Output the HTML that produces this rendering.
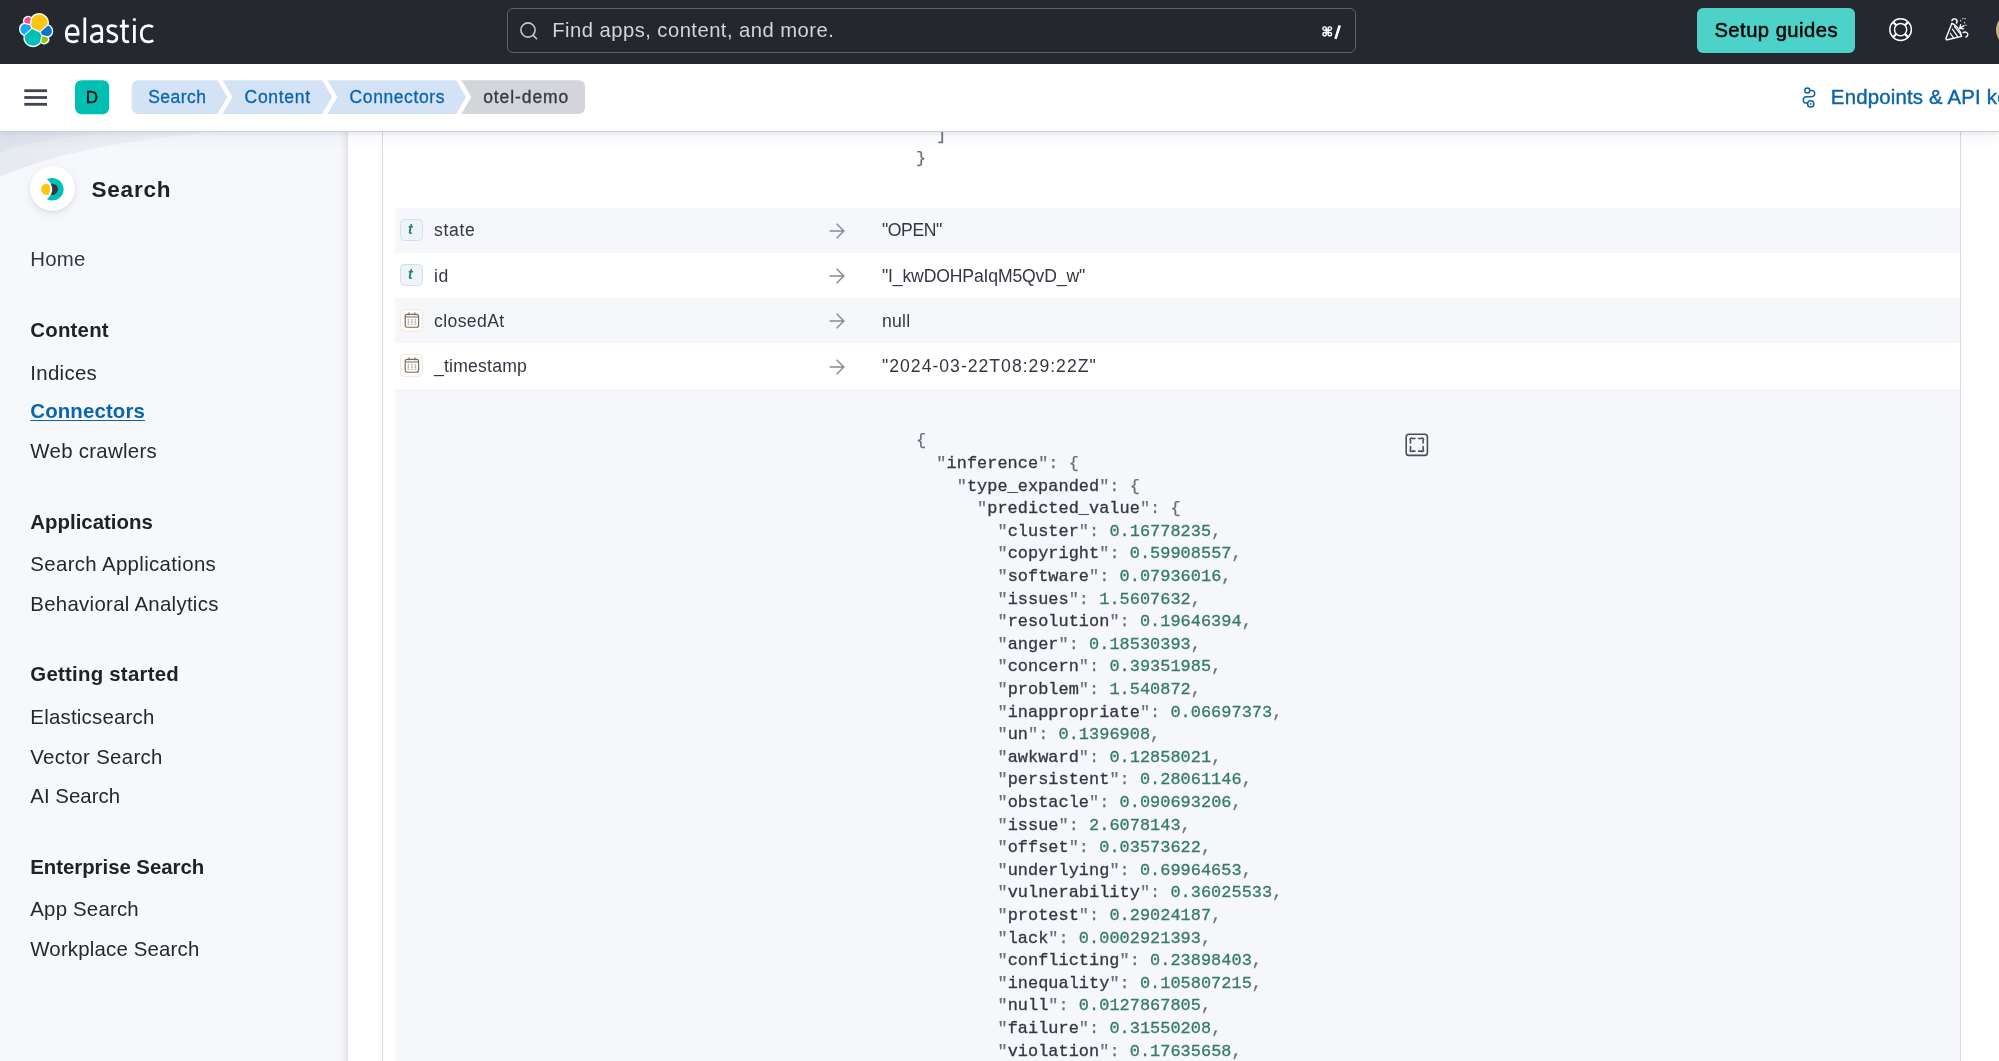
<!DOCTYPE html>
<html lang="en">
<head>
<meta charset="utf-8">
<title>otel-demo - Connectors - Search - Elastic</title>
<style>
*{box-sizing:border-box;margin:0;padding:0}
html,body{width:1999px;height:1061px;overflow:hidden;background:#fff}
body{position:relative;font-family:"Liberation Sans",sans-serif;color:#343741}
.abs{position:absolute}
.t,.tl{position:absolute;white-space:nowrap}
.c{position:absolute;white-space:pre;font:400 16.9px/22.6px "Liberation Mono",monospace;color:#343741}
.c .p{color:#69707d;-webkit-text-stroke:.25px #69707d}.c .k{color:#343741;-webkit-text-stroke:.3px #343741}.c .n{color:#357a66;-webkit-text-stroke:.3px #357a66}
#hdr1{left:0;top:0;width:1999px;height:64px;background:#25282f;z-index:20}
#hdr2{left:0;top:64px;width:1999px;height:67.6px;background:#fff;z-index:19;border-bottom:1px solid #ccd3de;box-shadow:0 2px 3px rgba(70,85,110,.06),0 6px 12px rgba(70,85,110,.07)}
#side{left:0;top:131px;width:348px;height:930px;background:linear-gradient(to right,rgba(30,32,40,0) 339px,rgba(30,32,40,.035) 344px,rgba(30,32,40,.10) 348px),#f7f8fc;z-index:5;overflow:hidden}
#panel{left:382px;top:100px;width:1579px;height:1000px;border-left:1px solid #d8dbe6;border-right:1px solid #d8dbe6;background:#fff;z-index:1}
.stripe{position:absolute;left:395px;width:1565px;background:#f5f7fa;z-index:2}
#txt{position:absolute;left:0;top:0;z-index:30;will-change:transform}
#code{position:absolute;left:0;top:0;z-index:3;will-change:transform}
.tok{position:absolute;width:22.6px;height:22.6px;border-radius:4.5px;z-index:4}
.tok.s{background:#eef3f8;border:1px solid #cfe0f2}
.tok.d{background:#fcfbf8;border:1px solid #f0e9dc}
svg{position:absolute;overflow:visible}
</style>
</head>
<body>
<!-- ===== dark top header ===== -->
<div id="hdr1" class="abs">
  <svg style="left:18.6px;top:12.6px" width="34.2" height="34.2" viewBox="0 0 32 32">
    <path fill="#FFF" d="M32 16.77a6.334 6.334 0 00-1.14-3.63 6.27 6.27 0 00-3.02-2.3 9.04 9.04 0 00.16-1.7 9.06 9.06 0 00-1.74-5.37A9.1 9.1 0 0021.7.44a9.16 9.16 0 00-5.66.02 9.1 9.1 0 00-4.56 3.3 4.78 4.78 0 00-5.23-.55 4.86 4.86 0 00-1.8 1.51 4.82 4.82 0 00-.62 4.47 6.37 6.37 0 00-3.02 2.31A6.37 6.37 0 000 15.24c0 1.3.4 2.58 1.15 3.65a6.3 6.3 0 003.03 2.3 9.02 9.02 0 001.55 7.05 9.07 9.07 0 004.55 3.31 9.13 9.13 0 005.64.01 9.07 9.07 0 004.56-3.29 4.79 4.79 0 005.22.53 4.83 4.83 0 002.43-5.97 6.37 6.37 0 003.01-2.31A6.33 6.33 0 0032 16.77"/>
    <path fill="#FEC514" d="M12.58 13.79l7 3.18 7.07-6.16a7.8 7.8 0 00.15-1.55c0-1.67-.54-3.3-1.53-4.64a7.9 7.9 0 00-4.02-2.83 7.94 7.94 0 00-4.93.08 7.89 7.89 0 00-3.93 2.95l-1.18 6.06 1.37 2.91z"/>
    <path fill="#00BFB3" d="M5.33 21.2a7.9 7.9 0 001.39 6.2 7.95 7.95 0 004.04 2.85c1.62.5 3.36.47 4.96-.08a7.92 7.92 0 003.94-2.98l1.16-6.04-1.55-2.96-7.03-3.19-6.91 6.2z"/>
    <path fill="#F04E98" d="M5.29 9.14l4.8 1.13 1.05-5.42a3.8 3.8 0 00-4.25-.52 3.78 3.78 0 00-1.6 4.81"/>
    <path fill="#1BA9F5" d="M4.87 10.28a5.35 5.35 0 00-2.57 1.9 5.27 5.27 0 00-.98 3.04c0 1.1.34 2.17.96 3.07a5.32 5.32 0 002.57 1.96l6.73-6.05-1.24-2.63-5.47-1.29z"/>
    <path fill="#93C90E" d="M20.87 27.15a3.78 3.78 0 004.22.5 3.76 3.76 0 001.63-4.77l-4.8-1.12-1.05 5.39z"/>
    <path fill="#07C" d="M21.85 20.5l5.28 1.23a5.37 5.37 0 002.57-1.9 5.28 5.28 0 00.03-6.12 5.32 5.32 0 00-2.58-1.95l-6.9 6.02 1.6 2.72z"/>
  </svg>
  <svg style="left:0;top:0" width="200" height="64" viewBox="0 0 200 64" fill="none" stroke="#fff" stroke-width="2.75" stroke-linecap="butt" stroke-linejoin="round">
    <path d="M66.4 34.4H78.2C78.4 29 76.5 25.5 72.3 25.5C68 25.5 66.3 29.5 66.3 33.8C66.3 38.5 68.3 41.8 72.8 41.8C75 41.8 76.8 41.2 78 40.4"/>
    <path d="M84.8 17.5V43"/>
    <path d="M91.8 27.2C93.5 26 95.6 25.5 97.2 25.5C100.3 25.5 101.7 27.3 101.7 30.3V43M101.7 33C98 33.2 91.3 33 91.3 37.8C91.3 40.6 93.2 41.8 95.5 41.8C98 41.8 100.2 40.5 101.7 38.8"/>
    <path d="M116.8 27C115.5 26 113.7 25.5 112 25.5C109.3 25.5 107.8 27 107.8 29.2C107.8 34.5 116.9 32.3 116.9 37.6C116.9 40.3 115 41.8 112 41.8C110 41.8 108.3 41.2 107.2 40.4"/>
    <path d="M123.5 19.8V38C123.5 40.8 124.8 41.8 126.8 41.8C127.6 41.8 128.4 41.6 129 41.3M119.8 26H128.8"/>
    <path d="M134.4 25V43"/><circle cx="134.4" cy="19.6" r="1.6" fill="#fff" stroke="none"/>
    <path d="M153 27C151.8 26 150.2 25.5 148.5 25.5C144 25.5 141.3 28.6 141.3 33.7C141.3 38.8 144 41.8 148.5 41.8C150.3 41.8 151.9 41.3 153.2 40.3"/>
  </svg>
  <div class="abs" style="left:507.4px;top:8px;width:848.2px;height:44.5px;border:1px solid #5d626d;border-radius:6px;background:#24272e"></div>
  <svg style="left:515px;top:17px" width="28" height="28" viewBox="0 0 28 28" fill="none" stroke="#c3c8d1" stroke-width="1.6" stroke-linecap="round">
    <circle cx="13" cy="13" r="7.1"/><path d="M18.2 18.4L21.6 21.8"/>
  </svg>
  <svg style="left:1320px;top:22px" width="24" height="20" viewBox="0 0 24 20" fill="none" stroke="#fff" stroke-width="1.45">
    <circle cx="4.6" cy="6.6" r="1.75"/><circle cx="9.8" cy="6.6" r="1.75"/><circle cx="4.6" cy="12.2" r="1.75"/><circle cx="9.8" cy="12.2" r="1.75"/>
    <path d="M6.3 6.6V12.2M8.1 6.6V12.2M4.6 8.4H9.8M4.6 10.4H9.8" stroke-width="1.3"/>
    <path d="M19.7 3.4L15.5 16.8" stroke-width="2.6"/>
  </svg>
  <svg style="left:1886px;top:15px" width="30" height="30" viewBox="0 0 30 30" fill="none" stroke="#fff" stroke-width="1.45">
    <circle cx="14.6" cy="14.6" r="10.8"/><circle cx="14.6" cy="14.6" r="6.1"/>
    <path d="M7 7L10.3 10.3M22.2 7L18.9 10.3M7 22.2L10.3 18.9M22.2 22.2L18.9 18.9" stroke-width="2.3"/>
  </svg>
  <svg style="left:1940px;top:14px" width="34" height="32" viewBox="0 0 34 32" fill="none" stroke="#fff" stroke-width="1.4" stroke-linecap="round" stroke-linejoin="round">
    <path d="M11.8 9.5L6 24.2C5.7 25.2 6.4 25.9 7.4 25.7L21.5 22.4"/>
    <path d="M11.8 9.5C15 10 21 16.5 21.5 22.4"/>
    <path d="M10.3 19.2L13.5 23.9M12.4 15.2L17.8 22.9M14.4 12.3L20.6 20.5" stroke-width="1.15"/>
    <path d="M11.9 6.6C12.6 5 14.4 4.5 15.7 5.2C17 6 17.3 7.8 16.5 9.2"/>
    <path d="M23.2 18.6C24.8 17.6 27 18.1 27.6 19.7C28.2 21.2 27.2 22.6 26 23"/>
    <path d="M19.6 14.4L24 11.6M19.6 14.4L20.6 10.6M19.6 14.4L23.6 14.8" stroke-width="1.3"/>
    <path d="M20.6 6.5L20.7 6.7M25 4.6L25.1 4.8M24.6 8.6L24.7 8.8M26 11.2L26.1 11.4M22.8 4.4L22.9 4.5" stroke-width="1.3" opacity=".8"/>
  </svg>
  <div class="abs" style="left:1697px;top:8px;width:157.7px;height:45px;border-radius:6px;background:#4dd2ca"></div>
  <div class="abs" style="left:1996px;top:13px;width:34px;height:34px;border-radius:17px;background:#c2b280"></div>
</div>
<!-- ===== second header: breadcrumbs ===== -->
<div id="hdr2" class="abs">
  <svg style="left:0;top:0" width="700" height="67" viewBox="0 64 700 67">
    <g fill="#404552"><rect x="24.3" y="89.3" width="22.7" height="2.8"/><rect x="24.3" y="96.1" width="22.7" height="2.8"/><rect x="24.3" y="102.9" width="22.7" height="2.8"/></g>
    <rect x="75" y="80.2" width="34.2" height="34" rx="6.5" fill="#00bfb3"/>
    <path fill="#d3e3f5" d="M138.2 80.2H217.4L227.3 97.1L217.4 114H138.2A6.5 6.5 0 0 1 131.7 107.5V86.7A6.5 6.5 0 0 1 138.2 80.2Z"/>
    <path fill="#d3e3f5" d="M222.6 80.2H322.2L332.1 97.1L322.2 114H222.6L232.5 97.1Z"/>
    <path fill="#d3e3f5" d="M327.4 80.2H456.2L466.1 97.1L456.2 114H327.4L337.3 97.1Z"/>
    <path fill="#d4d5da" d="M461.4 80.2H578.6A6.5 6.5 0 0 1 585.1 86.7V107.5A6.5 6.5 0 0 1 578.6 114H461.4L471.3 97.1Z"/>
  </svg>
  <svg style="left:1800px;top:22px" width="18" height="24" viewBox="1800 86 18 24" fill="none" stroke="#0a63ae" stroke-width="1.5" stroke-linecap="round">
    <circle cx="1807.3" cy="90.5" r="2.5"/>
    <path d="M1809.8 90.5H1811.3C1813.3 90.5 1814.7 91.8 1814.7 93.6C1814.7 95.4 1813.3 96.7 1811.3 96.7H1806.6C1804.6 96.7 1803.3 98 1803.3 99.9C1803.3 101.8 1804.6 103.1 1806.6 103.1H1807.4"/>
    <circle cx="1810.7" cy="103.9" r="3.1"/><circle cx="1810.7" cy="103.9" r="0.9" fill="#0a63ae" stroke="none"/>
  </svg>
</div>
<!-- ===== sidebar ===== -->
<div id="side" class="abs">
  <svg style="left:0;top:0" width="347" height="120" viewBox="0 131 347 120">
    <defs>
      <linearGradient id="sw1" x1="0" y1="0" x2="1" y2="0"><stop offset="0" stop-color="#dfe4ec" stop-opacity=".75"/><stop offset="1" stop-color="#e4e8ef" stop-opacity=".25"/></linearGradient>
      <linearGradient id="sw2" x1="0" y1="0" x2="1" y2="0"><stop offset="0" stop-color="#d8dee8" stop-opacity=".55"/><stop offset="1" stop-color="#dfe4ec" stop-opacity=".2"/></linearGradient>
      <linearGradient id="topsh" x1="0" y1="0" x2="0" y2="1"><stop offset="0" stop-color="#aeb6c4" stop-opacity=".35"/><stop offset="1" stop-color="#aeb6c4" stop-opacity="0"/></linearGradient>
    </defs>
    <path fill="url(#sw1)" d="M0 131H236C150 136 60 150 0 177Z"/>
    <path fill="url(#sw2)" d="M0 131H128C80 134 30 142 0 152Z"/>
  </svg>
  <div class="abs" style="left:30.2px;top:35px;width:45px;height:45px;border-radius:50%;background:#fff;box-shadow:0 3px 8px rgba(80,95,120,.13),0 1px 2px rgba(80,95,120,.10)"></div>
  <svg style="left:41.3px;top:46.8px" width="22.6" height="22.6" viewBox="0 0 32 32">
    <path fill="#00BFB3" d="M16 0c-2.918 0-5.645.794-8 2.158 4.777 2.768 8 7.923 8 13.842 0 5.919-3.223 11.074-8 13.842A15.907 15.907 0 0016 32c8.837 0 16-7.163 16-16S24.837 0 16 0z"/>
    <path fill="#FEC514" d="M8 24h2.222A12.996 12.996 0 0013 16c0-2.935-1.012-5.744-2.778-8H8a8 8 0 000 16z"/>
    <path fill="#343741" d="M16 8h-2.152A15.877 15.877 0 0116 16c0 2.918-.786 5.647-2.152 8H16a8 8 0 000-16z"/>
  </svg>
</div>
<!-- ===== main panel ===== -->
<div id="panel" class="abs"></div>
<div class="stripe" style="top:207.8px;height:45.1px"></div>
<div class="stripe" style="top:298.2px;height:45.1px"></div>
<div class="stripe" style="top:388.6px;height:700px"></div>
<div class="tok s" style="left:400.4px;top:218.60px"></div>
<div class="tl" style="z-index:6;left:408.4px;top:218.90px;font:italic 700 13.8px/22px 'Liberation Sans',sans-serif;color:#1f7f7a;will-change:transform">t</div>
<svg style="z-index:6;left:828px;top:221.90px" width="18" height="18" viewBox="0 0 18 18" fill="none" stroke="#858a94" stroke-width="1.45" stroke-linecap="butt" stroke-linejoin="miter"><path d="M1.6 9H15.6M8.6 1.8L15.8 9L8.6 16.2"/></svg>
<div class="tok s" style="left:400.4px;top:263.85px"></div>
<div class="tl" style="z-index:6;left:408.4px;top:264.15px;font:italic 700 13.8px/22px 'Liberation Sans',sans-serif;color:#1f7f7a;will-change:transform">t</div>
<svg style="z-index:6;left:828px;top:267.15px" width="18" height="18" viewBox="0 0 18 18" fill="none" stroke="#858a94" stroke-width="1.45" stroke-linecap="butt" stroke-linejoin="miter"><path d="M1.6 9H15.6M8.6 1.8L15.8 9L8.6 16.2"/></svg>
<div class="tok d" style="left:400.4px;top:309.10px"></div>
<svg style="z-index:6;left:404px;top:311.85px" width="16" height="17" viewBox="0 0 16 17" fill="none" stroke="#746e64" stroke-width="1.15">
  <rect x="1.2" y="2.4" width="13.4" height="12.8" rx="2"/><path d="M1.2 5H14.6M5 .5V3.2M10.8 .5V3.2"/>
  <path d="M4.4 7.4V8.3M7.9 7.4V8.3M11.4 7.4V8.3M4.4 9.5V10.4M7.9 9.5V10.4M11.4 9.5V10.4M4.4 11.7V12.6M7.9 11.7V12.6M11.4 11.7V12.6" stroke-width="1.4"/></svg>
<svg style="z-index:6;left:828px;top:312.40px" width="18" height="18" viewBox="0 0 18 18" fill="none" stroke="#858a94" stroke-width="1.45" stroke-linecap="butt" stroke-linejoin="miter"><path d="M1.6 9H15.6M8.6 1.8L15.8 9L8.6 16.2"/></svg>
<div class="tok d" style="left:400.4px;top:354.35px"></div>
<svg style="z-index:6;left:404px;top:357.10px" width="16" height="17" viewBox="0 0 16 17" fill="none" stroke="#746e64" stroke-width="1.15">
  <rect x="1.2" y="2.4" width="13.4" height="12.8" rx="2"/><path d="M1.2 5H14.6M5 .5V3.2M10.8 .5V3.2"/>
  <path d="M4.4 7.4V8.3M7.9 7.4V8.3M11.4 7.4V8.3M4.4 9.5V10.4M7.9 9.5V10.4M11.4 9.5V10.4M4.4 11.7V12.6M7.9 11.7V12.6M11.4 11.7V12.6" stroke-width="1.4"/></svg>
<svg style="z-index:6;left:828px;top:357.65px" width="18" height="18" viewBox="0 0 18 18" fill="none" stroke="#858a94" stroke-width="1.45" stroke-linecap="butt" stroke-linejoin="miter"><path d="M1.6 9H15.6M8.6 1.8L15.8 9L8.6 16.2"/></svg>
<svg style="z-index:6;left:1404px;top:432px" width="26" height="26" viewBox="1404 432 26 26" fill="none" stroke="#4a4e59" stroke-width="1.6" stroke-linecap="round" stroke-linejoin="round">
  <rect x="1406.2" y="434.2" width="21.2" height="21.2" rx="2.7"/>
  <path d="M1410.5 443V440.2A.9 .9 0 0 1 1412.2 438.5H1415M1418.6 438.5H1421.4A.9 .9 0 0 1 1423.1 440.2V443M1423.1 446.6V449.4A.9 .9 0 0 1 1421.4 451.1H1418.6M1415 451.1H1412.2A.9 .9 0 0 1 1410.5 449.4V446.6"/></svg>
<div id="code">
<div class="c" style="left:916.00px;top:430.39px;letter-spacing:0.038px"><span class="p">{</span></div>
<div class="c" style="left:936.36px;top:452.99px;letter-spacing:0.038px"><span class="p">"</span><span class="k">inference</span><span class="p">": {</span></div>
<div class="c" style="left:956.72px;top:475.59px;letter-spacing:0.038px"><span class="p">"</span><span class="k">type_expanded</span><span class="p">": {</span></div>
<div class="c" style="left:977.08px;top:498.19px;letter-spacing:0.038px"><span class="p">"</span><span class="k">predicted_value</span><span class="p">": {</span></div>
<div class="c" style="left:997.44px;top:520.79px;letter-spacing:0.038px"><span class="p">"</span><span class="k">cluster</span><span class="p">": </span><span class="n">0.16778235</span><span class="p">,</span></div>
<div class="c" style="left:997.44px;top:543.39px;letter-spacing:0.038px"><span class="p">"</span><span class="k">copyright</span><span class="p">": </span><span class="n">0.59908557</span><span class="p">,</span></div>
<div class="c" style="left:997.44px;top:565.99px;letter-spacing:0.038px"><span class="p">"</span><span class="k">software</span><span class="p">": </span><span class="n">0.07936016</span><span class="p">,</span></div>
<div class="c" style="left:997.44px;top:588.59px;letter-spacing:0.038px"><span class="p">"</span><span class="k">issues</span><span class="p">": </span><span class="n">1.5607632</span><span class="p">,</span></div>
<div class="c" style="left:997.44px;top:611.19px;letter-spacing:0.038px"><span class="p">"</span><span class="k">resolution</span><span class="p">": </span><span class="n">0.19646394</span><span class="p">,</span></div>
<div class="c" style="left:997.44px;top:633.79px;letter-spacing:0.038px"><span class="p">"</span><span class="k">anger</span><span class="p">": </span><span class="n">0.18530393</span><span class="p">,</span></div>
<div class="c" style="left:997.44px;top:656.39px;letter-spacing:0.038px"><span class="p">"</span><span class="k">concern</span><span class="p">": </span><span class="n">0.39351985</span><span class="p">,</span></div>
<div class="c" style="left:997.44px;top:678.99px;letter-spacing:0.038px"><span class="p">"</span><span class="k">problem</span><span class="p">": </span><span class="n">1.540872</span><span class="p">,</span></div>
<div class="c" style="left:997.44px;top:701.59px;letter-spacing:0.038px"><span class="p">"</span><span class="k">inappropriate</span><span class="p">": </span><span class="n">0.06697373</span><span class="p">,</span></div>
<div class="c" style="left:997.44px;top:724.19px;letter-spacing:0.038px"><span class="p">"</span><span class="k">un</span><span class="p">": </span><span class="n">0.1396908</span><span class="p">,</span></div>
<div class="c" style="left:997.44px;top:746.79px;letter-spacing:0.038px"><span class="p">"</span><span class="k">awkward</span><span class="p">": </span><span class="n">0.12858021</span><span class="p">,</span></div>
<div class="c" style="left:997.44px;top:769.39px;letter-spacing:0.038px"><span class="p">"</span><span class="k">persistent</span><span class="p">": </span><span class="n">0.28061146</span><span class="p">,</span></div>
<div class="c" style="left:997.44px;top:791.99px;letter-spacing:0.038px"><span class="p">"</span><span class="k">obstacle</span><span class="p">": </span><span class="n">0.090693206</span><span class="p">,</span></div>
<div class="c" style="left:997.44px;top:814.59px;letter-spacing:0.038px"><span class="p">"</span><span class="k">issue</span><span class="p">": </span><span class="n">2.6078143</span><span class="p">,</span></div>
<div class="c" style="left:997.44px;top:837.19px;letter-spacing:0.038px"><span class="p">"</span><span class="k">offset</span><span class="p">": </span><span class="n">0.03573622</span><span class="p">,</span></div>
<div class="c" style="left:997.44px;top:859.79px;letter-spacing:0.038px"><span class="p">"</span><span class="k">underlying</span><span class="p">": </span><span class="n">0.69964653</span><span class="p">,</span></div>
<div class="c" style="left:997.44px;top:882.39px;letter-spacing:0.038px"><span class="p">"</span><span class="k">vulnerability</span><span class="p">": </span><span class="n">0.36025533</span><span class="p">,</span></div>
<div class="c" style="left:997.44px;top:904.99px;letter-spacing:0.038px"><span class="p">"</span><span class="k">protest</span><span class="p">": </span><span class="n">0.29024187</span><span class="p">,</span></div>
<div class="c" style="left:997.44px;top:927.59px;letter-spacing:0.038px"><span class="p">"</span><span class="k">lack</span><span class="p">": </span><span class="n">0.0002921393</span><span class="p">,</span></div>
<div class="c" style="left:997.44px;top:950.19px;letter-spacing:0.038px"><span class="p">"</span><span class="k">conflicting</span><span class="p">": </span><span class="n">0.23898403</span><span class="p">,</span></div>
<div class="c" style="left:997.44px;top:972.79px;letter-spacing:0.038px"><span class="p">"</span><span class="k">inequality</span><span class="p">": </span><span class="n">0.105807215</span><span class="p">,</span></div>
<div class="c" style="left:997.44px;top:995.39px;letter-spacing:0.038px"><span class="p">"</span><span class="k">null</span><span class="p">": </span><span class="n">0.0127867805</span><span class="p">,</span></div>
<div class="c" style="left:997.44px;top:1017.99px;letter-spacing:0.038px"><span class="p">"</span><span class="k">failure</span><span class="p">": </span><span class="n">0.31550208</span><span class="p">,</span></div>
<div class="c" style="left:997.44px;top:1040.59px;letter-spacing:0.038px"><span class="p">"</span><span class="k">violation</span><span class="p">": </span><span class="n">0.17635658</span><span class="p">,</span></div>
<div class="c" style="left:997.44px;top:1063.19px;letter-spacing:0.038px"><span class="p">"</span><span class="k">threat</span><span class="p">": </span><span class="n">0.0512345</span><span class="p">,</span></div>
<div class="c" style="left:936.36px;top:124.99px;letter-spacing:0.038px"><span class="p">]</span></div>
<div class="c" style="left:916.00px;top:147.59px;letter-spacing:0.038px"><span class="p">}</span></div>
</div>
<div id="txt">
<div class="t" style="left:552.25px;top:16.87px;font-size:20.2px;line-height:26.26px;font-weight:400;color:#d1d5dc;letter-spacing:0.477px;">Find apps, content, and more.</div>
<div class="t" style="left:1714.39px;top:16.97px;font-size:20.2px;line-height:26.26px;font-weight:400;color:#000;letter-spacing:0.485px;-webkit-text-stroke:0.5px #000;">Setup guides</div>
<div class="t" style="left:85.70px;top:86.66px;font-size:17.0px;line-height:22.1px;font-weight:400;color:#000;-webkit-text-stroke:0.3px #000;">D</div>
<div class="t" style="left:148.15px;top:86.26px;font-size:17.5px;line-height:22.75px;font-weight:400;color:#0a63ae;letter-spacing:0.494px;-webkit-text-stroke:0.3px #0a63ae;">Search</div>
<div class="t" style="left:244.62px;top:86.26px;font-size:17.5px;line-height:22.75px;font-weight:400;color:#0a63ae;letter-spacing:0.696px;-webkit-text-stroke:0.3px #0a63ae;">Content</div>
<div class="t" style="left:349.62px;top:86.26px;font-size:17.5px;line-height:22.75px;font-weight:400;color:#0a63ae;letter-spacing:0.588px;-webkit-text-stroke:0.3px #0a63ae;">Connectors</div>
<div class="t" style="left:483.17px;top:86.26px;font-size:17.5px;line-height:22.75px;font-weight:400;color:#343741;letter-spacing:0.913px;-webkit-text-stroke:0.3px #343741;">otel-demo</div>
<div class="t" style="left:1830.86px;top:83.67px;font-size:20.4px;line-height:26.52px;font-weight:400;color:#0a63ae;-webkit-text-stroke:0.4px #0a63ae;letter-spacing:0.18px;white-space:nowrap;">Endpoints &amp; API keys</div>
<div class="t" style="left:91.60px;top:174.78px;font-size:22.5px;line-height:29.25px;font-weight:700;color:#202228;letter-spacing:0.752px;">Search</div>
<div class="t" style="left:30.30px;top:246.17px;font-size:20.4px;line-height:26.52px;font-weight:400;color:#343741;letter-spacing:0.210px;">Home</div>
<div class="t" style="left:30.30px;top:317.17px;font-size:20.4px;line-height:26.52px;font-weight:700;color:#202228;letter-spacing:0.217px;">Content</div>
<div class="t" style="left:30.30px;top:359.57px;font-size:20.4px;line-height:26.52px;font-weight:400;color:#25272e;letter-spacing:0.318px;">Indices</div>
<div class="t" style="left:30.30px;top:398.47px;font-size:20.4px;line-height:26.52px;font-weight:700;color:#0a63ae;letter-spacing:0.138px;text-decoration:underline;text-decoration-thickness:1.25px;text-underline-offset:1.6px;">Connectors</div>
<div class="t" style="left:30.30px;top:438.17px;font-size:20.4px;line-height:26.52px;font-weight:400;color:#25272e;letter-spacing:0.307px;">Web crawlers</div>
<div class="t" style="left:30.30px;top:508.77px;font-size:20.4px;line-height:26.52px;font-weight:700;color:#202228;letter-spacing:0.016px;">Applications</div>
<div class="t" style="left:30.30px;top:551.17px;font-size:20.4px;line-height:26.52px;font-weight:400;color:#25272e;letter-spacing:0.356px;">Search Applications</div>
<div class="t" style="left:30.30px;top:590.77px;font-size:20.4px;line-height:26.52px;font-weight:400;color:#25272e;letter-spacing:0.295px;">Behavioral Analytics</div>
<div class="t" style="left:30.30px;top:661.17px;font-size:20.4px;line-height:26.52px;font-weight:700;color:#202228;letter-spacing:0.246px;">Getting started</div>
<div class="t" style="left:30.30px;top:703.87px;font-size:20.4px;line-height:26.52px;font-weight:400;color:#25272e;letter-spacing:0.229px;">Elasticsearch</div>
<div class="t" style="left:30.30px;top:743.77px;font-size:20.4px;line-height:26.52px;font-weight:400;color:#25272e;letter-spacing:0.339px;">Vector Search</div>
<div class="t" style="left:30.30px;top:783.47px;font-size:20.4px;line-height:26.52px;font-weight:400;color:#25272e;letter-spacing:0.041px;">AI Search</div>
<div class="t" style="left:30.30px;top:854.17px;font-size:20.4px;line-height:26.52px;font-weight:700;color:#202228;letter-spacing:-0.042px;">Enterprise Search</div>
<div class="t" style="left:30.30px;top:896.17px;font-size:20.4px;line-height:26.52px;font-weight:400;color:#25272e;letter-spacing:0.199px;">App Search</div>
<div class="t" style="left:30.30px;top:936.17px;font-size:20.4px;line-height:26.52px;font-weight:400;color:#25272e;letter-spacing:0.185px;">Workplace Search</div>
<div class="t" style="left:434.00px;top:219.36px;font-size:17.6px;line-height:22.88px;font-weight:400;color:#343741;letter-spacing:0.682px;">state</div>
<div class="t" style="left:882.00px;top:219.36px;font-size:17.6px;line-height:22.88px;font-weight:400;color:#343741;letter-spacing:-0.415px;">"OPEN"</div>
<div class="t" style="left:434.00px;top:264.61px;font-size:17.6px;line-height:22.88px;font-weight:400;color:#343741;letter-spacing:0.711px;">id</div>
<div class="t" style="left:882.00px;top:264.61px;font-size:17.6px;line-height:22.88px;font-weight:400;color:#343741;letter-spacing:-0.152px;">"I_kwDOHPaIqM5QvD_w"</div>
<div class="t" style="left:434.00px;top:309.86px;font-size:17.6px;line-height:22.88px;font-weight:400;color:#343741;letter-spacing:0.383px;">closedAt</div>
<div class="t" style="left:882.00px;top:309.86px;font-size:17.6px;line-height:22.88px;font-weight:400;color:#343741;letter-spacing:0.234px;">null</div>
<div class="t" style="left:434.00px;top:355.11px;font-size:17.6px;line-height:22.88px;font-weight:400;color:#343741;letter-spacing:0.211px;">_timestamp</div>
<div class="t" style="left:882.00px;top:355.11px;font-size:17.6px;line-height:22.88px;font-weight:400;color:#343741;letter-spacing:1.010px;">"2024-03-22T08:29:22Z"</div>
</div>
</body>
</html>
